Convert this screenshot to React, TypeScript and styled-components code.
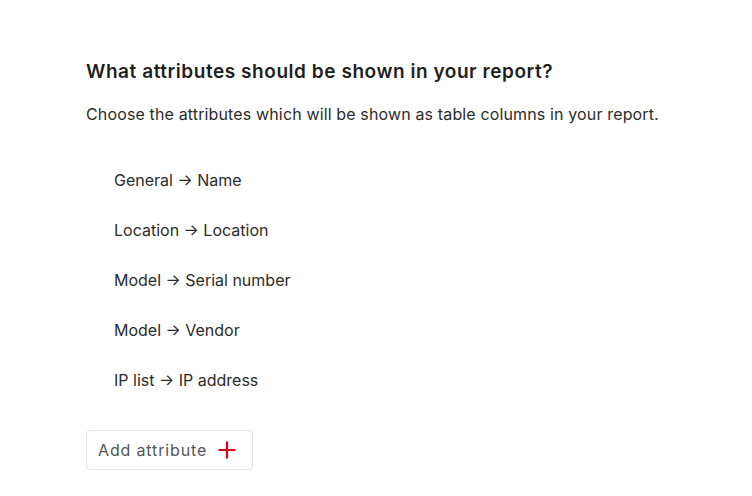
import React from "react";
import styled, { createGlobalStyle } from "styled-components";

const Global = createGlobalStyle`
  html, body { margin: 0; padding: 0; background: #ffffff; }
  body { font-family: Inter, "Noto Sans", sans-serif; color: #222; }
`;

const Page = styled.div`
  padding: 59px 40px 0 86px;
`;

const Title = styled.h2`
  margin: 0;
  font-size: 19px;
  line-height: 26px;
  font-weight: 600;
  letter-spacing: 0.55px;
  color: #1f1f1f;
`;

const Lead = styled.p`
  margin: 17px 0 0;
  font-size: 16px;
  line-height: 24px;
  letter-spacing: 0.14px;
  color: #2b2b2b;
`;

const List = styled.ul`
  list-style: none;
  margin: 42px 0 0;
  padding: 0 0 0 28px;
  display: flex;
  flex-direction: column;
  gap: 26px;
`;

const Item = styled.li`
  font-size: 16px;
  line-height: 24px;
  color: #2b2b2b;
`;

const AddButton = styled.button`
  margin-top: 38px;
  display: inline-flex;
  align-items: center;
  gap: 11px;
  height: 40px;
  padding: 0 16px 0 11px;
  background: #fff;
  border: 1px solid #e3e3e3;
  border-radius: 4px;
  font-family: Inter, "Noto Sans", sans-serif;
  font-size: 16px;
  color: #555;
  letter-spacing: 0.85px;
  cursor: pointer;
`;

const items = [
  ["General", "Name"],
  ["Location", "Location"],
  ["Model", "Serial number"],
  ["Model", "Vendor"],
  ["IP list", "IP address"],
];

export default function App() {
  return (
    <>
      <Global />
      <Page>
        <Title>What attributes should be shown in your report?</Title>
        <Lead>Choose the attributes which will be shown as table columns in your report.</Lead>
        <List>
          {items.map(([a, b], i) => (
            <Item key={i}>
              {a} → {b}
            </Item>
          ))}
        </List>
        <AddButton>
          Add attribute
          <svg width="18" height="18" viewBox="0 0 18 18">
            <path d="M9 0.5v17M0.5 9h17" stroke="#e2001a" strokeWidth="2.2" fill="none" />
          </svg>
        </AddButton>
      </Page>
    </>
  );
}
